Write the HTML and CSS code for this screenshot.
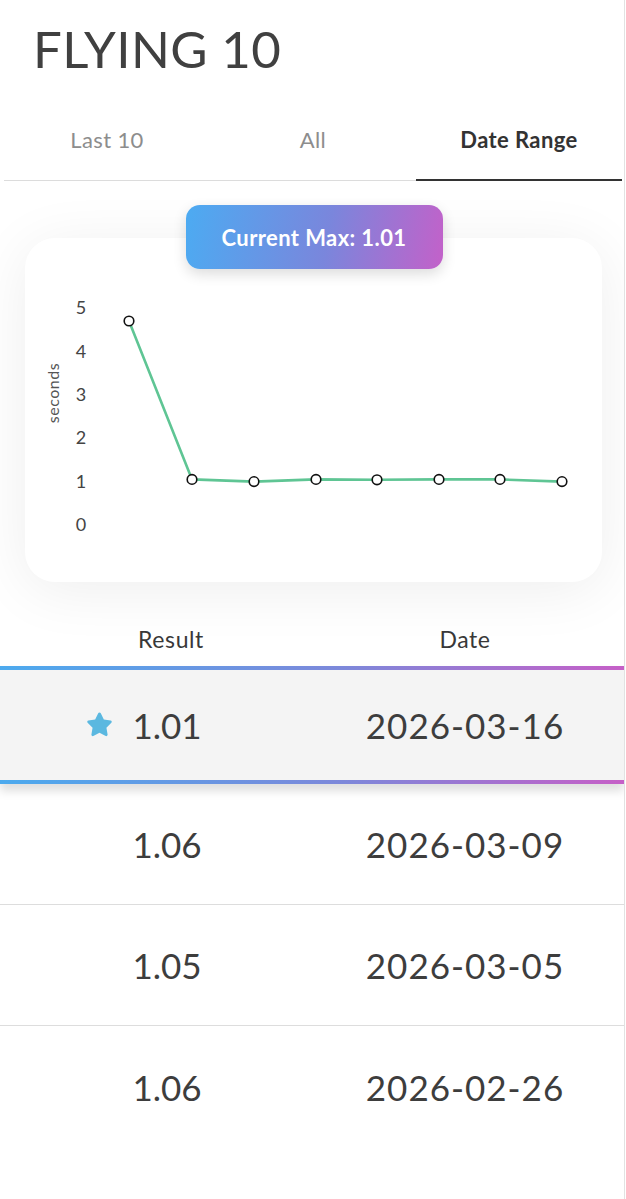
FILE: index.html
```html
<!DOCTYPE html>
<html lang="en">
<head>
<meta charset="utf-8">
<title>Flying 10</title>
<link rel="stylesheet" href="styles.css">
</head>
<body>
<div class="page">
  <h1 class="title">FLYING 10</h1>
  <nav class="tabs">
    <div class="tab">Last 10</div>
    <div class="tab">All</div>
    <div class="tab active">Date Range</div>
  </nav>
  <section class="chart-area">
    <div class="badge">Current Max: 1.01</div>
    <div class="card">
      <svg class="chart" width="577" height="344" viewBox="0 0 577 344">
        <g class="ylabels">
          <text x="56" y="76">5</text>
          <text x="56" y="120">4</text>
          <text x="56" y="163">3</text>
          <text x="56" y="206">2</text>
          <text x="56" y="250">1</text>
          <text x="56" y="293">0</text>
        </g>
        <text class="axis-title" transform="translate(34 155) rotate(-90)">seconds</text>
        <polyline class="line" points="104,83 167,241.4 229,243.6 291,241.4 352,241.8 414,241.4 475,241.4 537,243.6"/>
        <g class="dots">
          <circle cx="104" cy="83" r="4.8"/>
          <circle cx="167" cy="241.4" r="4.8"/>
          <circle cx="229" cy="243.6" r="4.8"/>
          <circle cx="291" cy="241.4" r="4.8"/>
          <circle cx="352" cy="241.8" r="4.8"/>
          <circle cx="414" cy="241.4" r="4.8"/>
          <circle cx="475" cy="241.4" r="4.8"/>
          <circle cx="537" cy="243.6" r="4.8"/>
        </g>
      </svg>
    </div>
  </section>
  <div class="thead">
    <div class="cell">Result</div>
    <div class="cell">Date</div>
  </div>
  <div class="row best">
    <div class="cell num"><span class="val"><svg class="star" width="29" height="27" viewBox="0 0 24 23"><path d="M12 1.2c.5 0 .9.3 1.1.7l2.6 5.4 5.8.8c.9.1 1.3 1.3.6 1.9l-4.2 4.2 1 5.9c.2.9-.8 1.6-1.6 1.2L12 18.5l-5.3 2.8c-.8.4-1.8-.3-1.6-1.2l1-5.9-4.2-4.2c-.7-.6-.3-1.8.6-1.9l5.8-.8 2.6-5.4c.2-.4.6-.7 1.1-.7z"/></svg>1.01</span></div>
    <div class="cell">2026-03-16</div>
  </div>
  <div class="row">
    <div class="cell num">1.06</div>
    <div class="cell">2026-03-09</div>
  </div>
  <div class="row">
    <div class="cell num">1.05</div>
    <div class="cell">2026-03-05</div>
  </div>
  <div class="row last">
    <div class="cell num">1.06</div>
    <div class="cell">2026-02-26</div>
  </div>
</div>
</body>
</html>
```

FILE: styles.css
```css
* { box-sizing: border-box; }
html, body { margin: 0; padding: 0; background: #ffffff; }
body {
  font-family: Lato, "Noto Sans", "Liberation Sans", sans-serif;
  color: #3d3d3d;
}
.page {
  width: 625px;
  min-height: 1199px;
  border-right: 1px solid #e2e2e2;
  overflow: hidden;
}
.title {
  margin: 19px 0 0 33px;
  font-size: 51px;
  line-height: 60px;
  font-weight: 400;
  color: #404040;
  letter-spacing: 0.4px;
}
.tabs {
  display: flex;
  margin: 24px 2px 0 4px;
}
.tab {
  flex: 1;
  text-align: center;
  font-size: 22px;
  line-height: 26px;
  letter-spacing: 0.4px;
  color: #8d8d8d;
  padding: 24px 0 27px;
  border-bottom: 1px solid #dcdcdc;
}
.tab.active {
  color: #333333;
  font-weight: 700;
  padding-bottom: 26px;
  border-bottom: 2px solid #333333;
}
.chart-area {
  padding: 24px 23px 0 25px;
  display: flex;
  flex-direction: column;
  align-items: center;
}
.badge {
  position: relative;
  z-index: 1;
  width: 257px;
  height: 64px;
  margin-left: 2px;
  margin-bottom: -31px;
  border-radius: 14px;
  background: linear-gradient(100deg, #4cabf2 0%, #7a86dc 55%, #c361c9 100%);
  color: #ffffff;
  font-size: 22px;
  letter-spacing: 0.4px;
  font-weight: 700;
  display: flex;
  align-items: center;
  justify-content: center;
  box-shadow: 0 5px 14px rgba(0, 0, 0, 0.14);
}
.card {
  width: 577px;
  height: 344px;
  background: #ffffff;
  border-radius: 30px;
  box-shadow: 0 8px 60px rgba(0, 0, 0, 0.07);
}
.chart { display: block; }
.ylabels text {
  font-family: Lato, "Noto Sans", sans-serif;
  font-size: 18px;
  fill: #444444;
  text-anchor: middle;
}
.axis-title {
  font-family: Lato, "Noto Sans", sans-serif;
  font-size: 16px;
  letter-spacing: 0.5px;
  fill: #555555;
  text-anchor: middle;
}
.line {
  fill: none;
  stroke: #5fc594;
  stroke-width: 2.6;
  stroke-linejoin: round;
}
.dots circle {
  fill: #ffffff;
  stroke: #111111;
  stroke-width: 1.6;
}
.thead {
  display: grid;
  grid-template-columns: 1fr 1fr;
  padding: 0 12px 12px 24px;
  margin-top: 42px;
  font-size: 23px;
  letter-spacing: 0.6px;
  line-height: 30px;
  color: #383838;
}
.cell { text-align: center; }
.row {
  display: grid;
  grid-template-columns: 1fr 1fr;
  align-items: center;
  padding: 0 12px 0 24px;
  height: 121px;
  border-bottom: 1px solid #dddddd;
  font-size: 35px;
  line-height: 40px;
  color: #3d3d3d;
}
.row .cell:last-child { letter-spacing: 1px; }
.row .num { padding-right: 8px; }
.row.last { border-bottom: none; }
.row.best {
  height: 118px;
  background: #f4f4f4;
  border-top: 4px solid transparent;
  border-bottom: 4px solid transparent;
  border-image: linear-gradient(90deg, #4caaee 0%, #7d88da 55%, #c65fc7 100%) 1;
  box-shadow: 0 7px 9px rgba(0, 0, 0, 0.13);
  position: relative;
  z-index: 1;
}
.val { position: relative; }
.star {
  position: absolute;
  left: -47px;
  top: 7px;
  fill: #5bb8e0;
}
```
